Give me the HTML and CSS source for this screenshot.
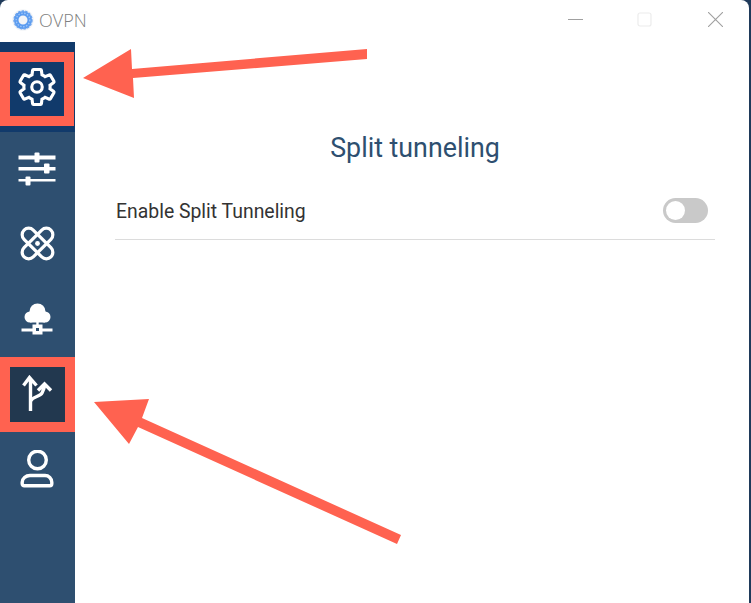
FILE: index.html
```html
<!DOCTYPE html>
<html lang="en">
<head>
    <meta charset="UTF-8">
    <meta name="viewport" content="width=device-width, initial-scale=1.0">
    <title>OVPN</title>
    <link rel="stylesheet" href="styles.css">
</head>
<body>
    <div class="window">
        <header class="titlebar">
            <svg class="logo" width="22" height="22" viewBox="0 0 22 22">
                <circle cx="11" cy="11" r="10.8" fill="#f2f4f7"/>
                <circle cx="11" cy="11" r="6.8" fill="none" stroke="#5a9bf0" stroke-width="4.6"/>
                <circle cx="11" cy="11" r="6.8" fill="none" stroke="#9cc4f7" stroke-width="1.4" stroke-dasharray="1.5 1.5"/>
                <circle cx="11" cy="11" r="9" fill="none" stroke="#6ea5ee" stroke-width="1.4" stroke-dasharray="2.4 1.3"/>
            </svg>
            <span class="app-name">OVPN</span>
            <div class="win-controls">
                <svg width="15" height="15" viewBox="0 0 15 15"><path d="M0 7.5h15" stroke="#a0a0a0" fill="none"/></svg>
                <svg width="15" height="15" viewBox="0 0 15 15"><rect x="1" y="1" width="13" height="13" rx="2" fill="none" stroke="#ececec" stroke-width="1.2"/></svg>
                <svg class="win-close" width="15" height="15" viewBox="0 0 15 15"><path d="M0 0l15 15M15 0L0 15" stroke="#a0a0a0" stroke-width="1.1" fill="none"/></svg>
            </div>
        </header>

        <div class="main">
            <nav class="sidebar">
                <div class="nav-item nav-first">
                    <div class="mark">
                        <div class="mark-inner mark-blue">
                            <svg class="icon icon-gear" width="42" height="42" viewBox="0 0 24 24" fill="none" stroke="#fff" stroke-width="1.8">
                                <path d="M19.43 12.98c.04-.32.07-.64.07-.98 0-.34-.03-.66-.07-.98l2.11-1.65c.19-.15.24-.42.12-.64l-2-3.46c-.09-.16-.26-.25-.44-.25-.06 0-.12.01-.17.03l-2.49 1c-.52-.4-1.08-.73-1.69-.98l-.38-2.65C14.46 2.18 14.25 2 14 2h-4c-.25 0-.46.18-.49.42l-.38 2.65c-.61.25-1.17.59-1.69.98l-2.49-1c-.06-.02-.12-.03-.18-.03-.17 0-.34.09-.43.25l-2 3.46c-.13.22-.07.49.12.64l2.11 1.65c-.04.32-.07.65-.07.98 0 .33.03.66.07.98l-2.11 1.65c-.19.15-.24.42-.12.64l2 3.46c.09.16.26.25.44.25.06 0 .12-.01.17-.03l2.49-1c.52.4 1.08.73 1.69.98l.38 2.65c.03.24.24.42.49.42h4c.25 0 .46-.18.49-.42l.38-2.65c.61-.25 1.17-.59 1.69-.98l2.49 1c.06.02.12.03.18.03.17 0 .34-.09.43-.25l2-3.46c.12-.22.07-.49-.12-.64l-2.11-1.65z"/>
                                <circle cx="12" cy="12" r="3"/>
                            </svg>
                        </div>
                    </div>
                </div>
                <div class="nav-item">
                    <svg class="icon" width="40" height="40" viewBox="0 0 40 40" fill="#fff">
                        <rect x="0.5" y="5.5" width="37" height="4"/><rect x="16.5" y="2.5" width="5" height="10" rx="1"/>
                        <rect x="0.5" y="17" width="37" height="3.5"/><rect x="26" y="13.5" width="5.5" height="10" rx="1"/>
                        <rect x="0.5" y="29" width="37" height="2.5"/><rect x="7.5" y="26.5" width="5" height="9" rx="1"/>
                    </svg>
                </div>
                <div class="nav-item">
                    <svg class="icon" width="40" height="40" viewBox="0 0 40 40" fill="none" stroke="#fff" stroke-width="3.2">
                        <rect x="0.5" y="12" width="38" height="13" rx="6.5" transform="rotate(45 19.5 18.5)"/>
                        <rect x="0.5" y="12" width="38" height="13" rx="6.5" transform="rotate(-45 19.5 18.5)"/>
                        <circle cx="19.5" cy="18.5" r="2.4" fill="#fff" stroke="none"/>
                    </svg>
                </div>
                <div class="nav-item">
                    <svg class="icon" width="40" height="40" viewBox="0 0 40 40" fill="#fff">
                        <circle cx="19.5" cy="11.5" r="8"/>
                        <circle cx="12" cy="17" r="5.5"/>
                        <circle cx="27" cy="17" r="5.5"/>
                        <rect x="12" y="15" width="15" height="7.5"/>
                        <rect x="18.3" y="22" width="2.4" height="3"/>
                        <rect x="3.5" y="28.5" width="31" height="3"/>
                        <rect x="14.5" y="24.5" width="10" height="10"/>
                        <rect x="18" y="28" width="3" height="3" fill="#2e4f70"/>
                    </svg>
                </div>
                <div class="nav-item">
                    <div class="mark">
                        <div class="mark-inner mark-dark">
                            <svg class="icon" width="40" height="40" viewBox="0 0 40 40" fill="none" stroke="#fff" stroke-width="3.4">
                                <path d="M12.5 36V3M5.5 10.5l6-8 7 8"/>
                                <path d="M12.5 26C15 21 22 22 24 18c2-3 2.5-5 2.5-9M20 15.5l6.5-6.5 6.5 6.5"/>
                            </svg>
                        </div>
                    </div>
                </div>
                <div class="nav-item">
                    <svg class="icon" width="40" height="40" viewBox="0 0 40 40" fill="none" stroke="#fff" stroke-width="3.4">
                        <circle cx="19.5" cy="10" r="8.8"/>
                        <path d="M12 25.5h15a6.8 6.8 0 0 1 6.8 6.8v1.500a2 2 0 0 1-2 2H6.200a2 2 0 0 1-2-2v-1.500a7.800 6.800 0 0 1 7.800-6.800z"/>
                    </svg>
                </div>
            </nav>

            <main class="content">
                <h1 class="page-title">Split tunneling</h1>
                <div class="setting-row">
                    <span class="setting-label">Enable Split Tunneling</span>
                    <span class="toggle"><span class="toggle-knob"></span></span>
                </div>
            </main>
        </div>

        <!-- annotation arrows drawn over the screenshot -->
        <svg class="arrows" width="751" height="603" viewBox="0 0 751 603">
            <polygon points="83,78 131,49 132,69 367,49 367,59 133,78 134,98"/>
            <polygon points="94,402 149,399 142,418 401,535 397,544 138,427 129,444"/>
        </svg>
    </div>
</body>
</html>
```

FILE: styles.css
```css
html, body {
    margin: 0;
    height: 100%;
    overflow: hidden;
    background-color: #1f3a5a;
}
.window {
    position: relative;
    display: flex;
    flex-direction: column;
    height: 603px;
    width: 749px;
    background: white;
    border-radius: 8px 8px 0 0;
    overflow: hidden;
}
.titlebar {
    display: flex;
    align-items: center;
    height: 42px;
    padding-left: 12px;
    padding-bottom: 3px;
    box-sizing: border-box;
    flex-shrink: 0;
}
.app-name {
    margin-left: 5px;
    font-family: "Open Sans", sans-serif;
    font-size: 18px;
    font-weight: 300;
    color: #808080;
}
.win-controls {
    display: flex;
    gap: 54px;
    margin-left: auto;
    margin-right: 26px;
}
.win-close {
    margin-left: 2px;
}
.main {
    display: flex;
    flex: 1;
}
.sidebar {
    width: 75px;
    background-color: #2e4f70;
    flex-shrink: 0;
}
.nav-item {
    display: flex;
    align-items: center;
    justify-content: center;
    height: 75px;
}
.nav-first {
    height: 90px;
    padding: 10px 1px 6px 0;
    box-sizing: border-box;
    background-color: #113a6b;
}
.mark {
    flex: 1;
    align-self: stretch;
    background-color: #ff6250;
    padding: 10px;
    display: flex;
}
.mark-inner {
    flex: 1;
    display: flex;
    align-items: center;
    justify-content: center;
}
.mark-blue { background-color: #113a6b; }
.mark-dark { background-color: #22384f; }
.icon-gear {
    margin-bottom: 4px;
}
.page-title {
    margin: 0;
    padding-top: 89px;
    text-align: center;
    font-family: Roboto, sans-serif;
    font-size: 26.8px;
    font-weight: 400;
    line-height: 34px;
    color: #2e4f70;
}
.content {
    flex: 1;
    padding: 0 34px 0 40px;
}
.setting-row {
    display: flex;
    align-items: center;
    justify-content: space-between;
    height: 57px;
    margin-top: 18px;
    padding: 0 7px 1px 1px;
    box-sizing: border-box;
    border-bottom: 1px solid #dcdcdc;
}
.setting-label {
    padding-top: 2px;
    font-family: Roboto, sans-serif;
    font-size: 19.4px;
    color: #333;
}
.toggle {
    display: flex;
    align-items: center;
    width: 45px;
    height: 25px;
    padding-left: 3px;
    box-sizing: border-box;
    border-radius: 13px;
    background-color: #c9c9c9;
}
.toggle-knob {
    width: 19px;
    height: 19px;
    border-radius: 50%;
    background: white;
}
.arrows {
    position: absolute;
    left: 0;
    top: 0;
    pointer-events: none;
}
.arrows polygon {
    fill: #ff6250;
}
```
